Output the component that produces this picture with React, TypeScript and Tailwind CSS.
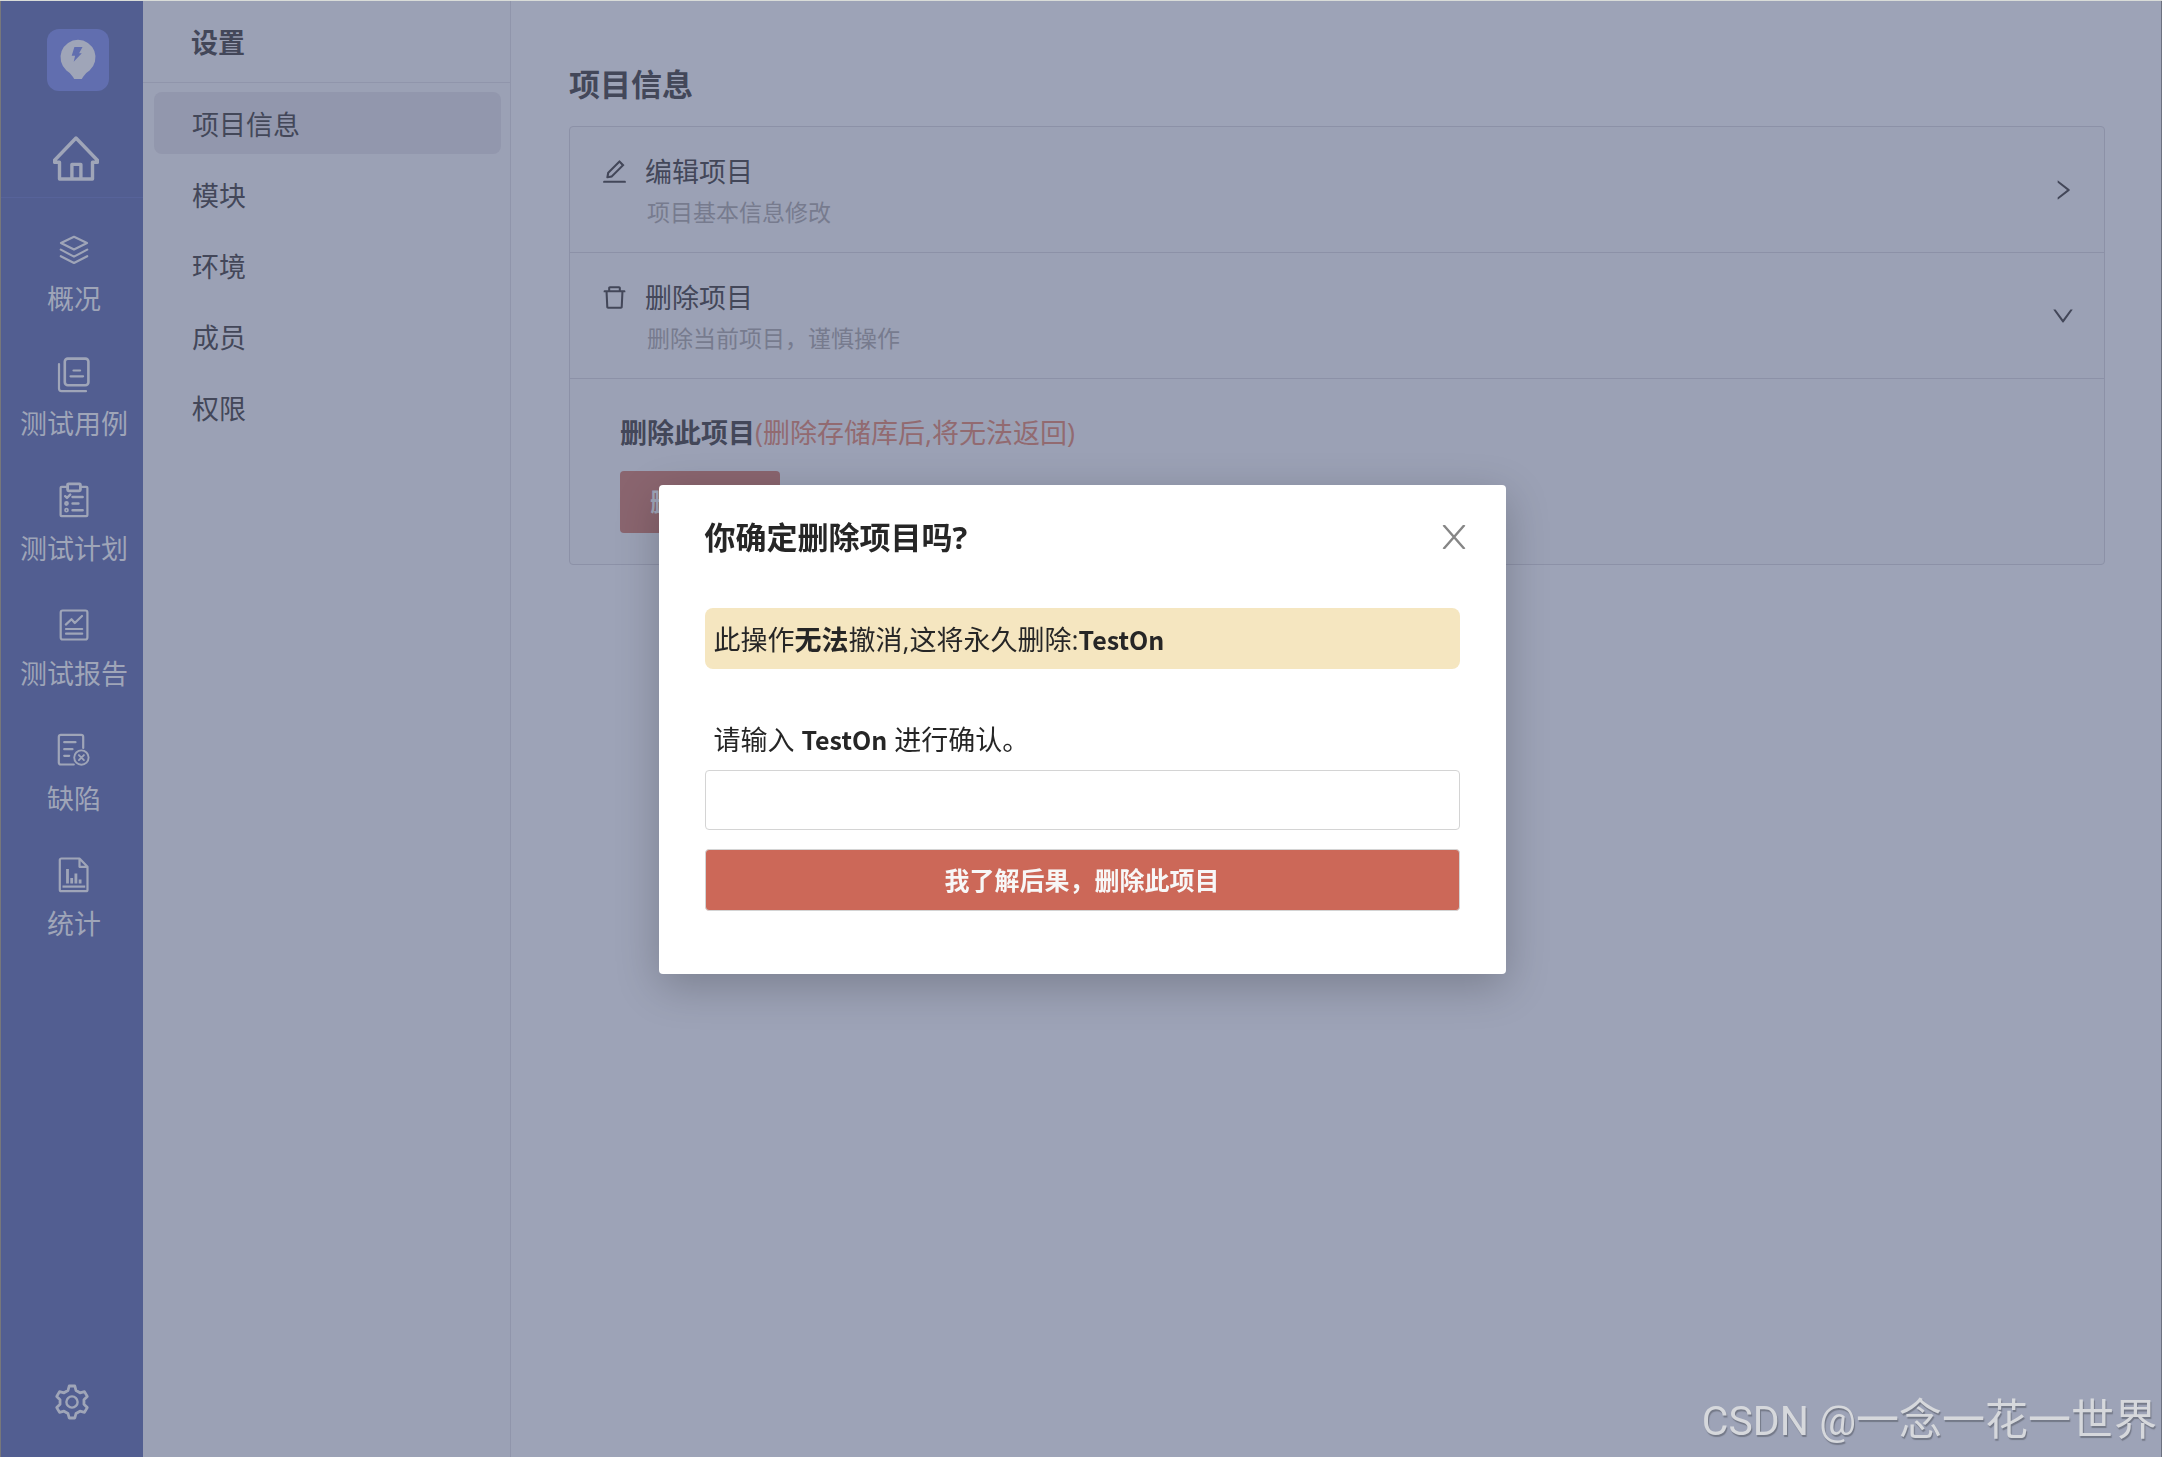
import React, { useState } from 'react';
import { AiOutlineDelete, AiOutlineDown, AiOutlineEdit, AiOutlineRight } from 'react-icons/ai';

const PROJECT_NAME = 'TestOn';

const SETTINGS_MENU = ['项目信息', '模块', '环境', '成员', '权限'];

type IconProps = { children: React.ReactNode };

function NavIcon({ children }: IconProps) {
  return (
    <svg
      viewBox="0 0 36 36"
      className="w-9 h-9"
      fill="none"
      stroke="currentColor"
      strokeWidth="2.2"
      strokeLinecap="round"
      strokeLinejoin="round"
    >
      {children}
    </svg>
  );
}

const NAV_ITEMS = [
  {
    label: '概况',
    icon: (
      <NavIcon>
        <path d="M18 4.8 31 11 18 17.6 5 11ZM4.8 17.6 18 24.6l13.2-7M4.8 24.2 18 31l13.2-6.8" />
      </NavIcon>
    ),
  },
  {
    label: '测试用例',
    icon: (
      <NavIcon>
        <rect x="8.8" y="1.6" width="23.6" height="26.6" rx="3" strokeWidth="2.6" />
        <path d="M3 7v24.6a2.6 2.6 0 0 0 2.6 2.6H30M17.5 13.5h6.6M14.5 19.3h12.6" />
      </NavIcon>
    ),
  },
  {
    label: '测试计划',
    icon: (
      <NavIcon>
        <path d="M11 4.8H5.6a1 1 0 0 0-1 1v27.4a1 1 0 0 0 1 1h24.8a1 1 0 0 0 1-1V5.8a1 1 0 0 0-1-1H25" />
        <rect x="11.6" y="1.8" width="12.8" height="7" rx="1" strokeWidth="2.8" />
        <path d="m9.2 14.2 1.8 1.8 3.2-3.4M16.5 15h10.2M16.5 21.5h6M16.5 28.2h10.2" strokeWidth="2.4" />
        <circle cx="10.5" cy="21.5" r="1.3" />
        <circle cx="10.5" cy="28.2" r="1.5" strokeWidth="1.7" />
      </NavIcon>
    ),
  },
  {
    label: '测试报告',
    icon: (
      <NavIcon>
        <rect x="4.7" y="3.5" width="26.7" height="29" rx="2" />
        <path d="m9.8 17.6 5.7-5.4L18.8 16l7.2-7M10 22h16.2M10 26.7h16.2" />
      </NavIcon>
    ),
  },
  {
    label: '缺陷',
    icon: (
      <NavIcon>
        <path d="M27.2 16V4.8a2 2 0 0 0-2-2H4.8a2 2 0 0 0-2 2v25.7a2 2 0 0 0 2 2h13M8.2 10.2h11.3M8.2 17.2h8.3M8.2 23.8h5" />
        <circle cx="25.4" cy="25.6" r="7.2" strokeWidth="1.9" />
        <path d="m22.9 23.1 5 5M27.9 23.1l-5 5" strokeWidth="1.9" />
      </NavIcon>
    ),
  },
  {
    label: '统计',
    icon: (
      <NavIcon>
        <path d="M23.5 1.5H5.3a1.5 1.5 0 0 0-1.500 1.500v29.700a1.500 1.500 0 0 0 1.500 1.500H30a1.500 1.500 0 0 0 1.500-1.500V9.800ZM23.500 1.500v8.300h8" />
        <path d="M11.5 12v14.500M15.700 21v5.500M19.900 16.500v10M24.100 22.500v4" strokeWidth="2.8" strokeLinecap="butt" />
        <path d="M6.5 29.6h22.700" strokeLinecap="butt" />
      </NavIcon>
    ),
  },
];

function Sidebar() {
  return (
    <aside className="w-[143px] shrink-0 flex flex-col bg-[#525e91] border-l border-[#77777b] text-[#9fa5b8]">
      <div className="flex flex-col items-center h-[197px] pt-[28px] pl-3 border-b border-[#57639a]">
        <a href="#" aria-label="TestOn" className="block rounded-xl bg-[#616eaf]">
          <svg viewBox="0 0 62 62" className="w-[62px] h-[62px]">
            <path
              fill="currentColor"
              d="M31 10.8a17.5 17.5 0 0 1 11.600 30.600Q38 44 36 48L34.800 50h-7.600L26 48Q24 44 19.400 41.400A17.500 17.500 0 0 1 31 10.800Z"
            />
            <path
              fill="#616eaf"
              d="M27.4 18h8.100l-3.400 6.300h2.700l-8.100 8.400 1.400-6h-3.400Z"
            />
          </svg>
        </a>
        <a href="#" aria-label="首页" className="mt-[45px] pr-1">
          <svg
            viewBox="0 0 46 46"
            className="w-[46px] h-[46px]"
            fill="none"
            stroke="currentColor"
            strokeWidth="3.4"
            strokeLinejoin="round"
          >
            <path d="M23 2 44.4 24.2v2H39.5V43h-33V26.2H1.6v-2Z" />
            <path d="M18.9 43V28.4h9V43" />
          </svg>
        </a>
      </div>

      <nav className="flex flex-col pt-[34px] pl-1 gap-9">
        {NAV_ITEMS.map((item) => (
          <a key={item.label} href="#" className="flex flex-col items-center gap-2">
            {item.icon}
            <span className="text-[27px] leading-[45px] whitespace-nowrap">{item.label}</span>
          </a>
        ))}
      </nav>

      <button type="button" aria-label="系统设置" className="mt-auto mb-[37px] self-center">
        <svg
          viewBox="-18 -18 36 36"
          className="w-9 h-9"
          fill="none"
          stroke="currentColor"
          strokeWidth="2.8"
          strokeLinejoin="round"
        >
          <path d="M-4-11.5-2.8-16h5.6L4-11.5 7.96-9.21l4.5-1.21 2.8 4.84-3.3 3.29v4.58l3.3 3.29-2.8 4.84-4.5-1.21L4 11.5 2.8 16h-5.6L-4 11.5l-3.96-2.29-4.5 1.21-2.8-4.84 3.3-3.29v-4.58l-3.3-3.29 2.8-4.84 4.5 1.21Z" />
          <circle r="5.6" strokeWidth="2.4" />
        </svg>
      </button>
    </aside>
  );
}

function SettingsMenu() {
  return (
    <div className="w-[368px] shrink-0 bg-[#9ba1b5] border-r border-[#9095ab]">
      <h2 className="h-[82px] pl-12 border-b border-[#9095ab] text-[27px] leading-[84px] font-bold">
        设置
      </h2>
      <nav className="flex flex-col gap-[9px] pt-[9px] pl-[11px] pr-[9px]">
        {SETTINGS_MENU.map((label, index) => (
          <a
            key={label}
            href="#"
            className={`h-[62px] pl-[38px] rounded-lg text-[27px] leading-[65px] ${
              index === 0 ? 'bg-[#9297ad]' : ''
            }`}
          >
            {label}
          </a>
        ))}
      </nav>
    </div>
  );
}

type SettingRowProps = {
  icon: React.ReactNode;
  title: string;
  description: string;
  open?: boolean;
};

function SettingRow({ icon, title, description, open = false }: SettingRowProps) {
  return (
    <button
      type="button"
      aria-expanded={open}
      className="w-full h-[126px] flex items-center justify-between pl-[30px] pr-7 border-b border-[#8c91a7] text-left"
    >
      <span className="flex gap-4 pt-1">
        <span className="flex items-center h-10 text-[29px]">{icon}</span>
        <span className="flex flex-col">
          <span className="text-[27px] leading-10">{title}</span>
          <span className="pl-[2px] text-[23px] leading-10 text-[#777b8e]">{description}</span>
        </span>
      </span>
      <span className="text-[26px]">{open ? <AiOutlineDown /> : <AiOutlineRight />}</span>
    </button>
  );
}

function ProjectInfo() {
  return (
    <main className="flex-1 pl-[58px] pr-14 pt-[59px] border-r border-[#6c7180]">
      <h1 className="text-[31px] leading-[48px] font-bold">项目信息</h1>
      <section className="mt-[18px] border border-[#8c91a7] rounded bg-[#9ba1b5]">
        <SettingRow
          icon={<AiOutlineEdit />}
          title="编辑项目"
          description="项目基本信息修改"
        />
        <SettingRow
          icon={<AiOutlineDelete />}
          title="删除项目"
          description="删除当前项目，谨慎操作"
          open
        />
        <div className="pl-[50px] pt-[34px] pb-[31px]">
          <p className="text-[27px] leading-10">
            <span className="font-bold">删除此项目</span>
            <span className="text-[#926a70]">(删除存储库后,将无法返回)</span>
          </p>
          <button
            type="button"
            className="mt-[18px] w-40 h-[62px] rounded bg-[#8a656f] text-[25px] font-bold text-[#9fa5b8]"
          >
            删除项目
          </button>
        </div>
      </section>
    </main>
  );
}

function ProjectName() {
  return (
    <b className="text-[25px] font-bold font-['Noto_Sans_CJK_SC',sans-serif]">{PROJECT_NAME}</b>
  );
}

function DeleteProjectDialog() {
  const [confirmName, setConfirmName] = useState('');

  return (
    <div className="fixed inset-0 flex items-center justify-center pl-[2px] pt-[2px]">
      <div
        role="dialog"
        aria-labelledby="delete-title"
        className="w-[847px] px-[46px] pt-7 pb-[63px] rounded bg-white text-[#262626] shadow-[0_12px_44px_rgba(0,0,0,0.22)]"
      >
        <div className="flex items-center justify-between">
          <h2 id="delete-title" className="text-[31px] leading-[48px] font-bold">
            你确定删除项目吗?
          </h2>
          <button type="button" aria-label="关闭" className="-mr-[6px] text-[#868686]">
            <svg
              viewBox="0 0 24 24"
              className="w-6 h-6"
              fill="none"
              stroke="currentColor"
              strokeWidth="2.4"
            >
              <path d="M1.5 0 22.5 24M22.5 0 1.5 24" />
            </svg>
          </button>
        </div>

        <p className="mt-[47px] h-[61px] px-[9px] rounded-lg bg-[#f5e6c0] text-[27px] leading-[62px]">
          此操作<b>无法</b>撤消,这将永久删除:
          <ProjectName />
        </p>

        <form className="mt-[50px]" onSubmit={(e) => e.preventDefault()}>
          <label htmlFor="confirm-name" className="block pl-[9px] text-[27px] leading-[40px]">
            请输入 <ProjectName /> 进行确认。
          </label>
          <input
            id="confirm-name"
            type="text"
            value={confirmName}
            onChange={(e) => setConfirmName(e.target.value)}
            className="mt-[10px] w-full h-[60px] px-4 border border-[#d4d4d4] rounded text-[27px] outline-none"
          />
          <button
            type="submit"
            className="mt-[19px] block w-full h-[62px] pt-[2px] rounded border border-[#d4d4d4] bg-[#cc6858] text-[25px] font-bold text-[#f7f7f7]"
          >
            我了解后果，删除此项目
          </button>
        </form>
      </div>
    </div>
  );
}

export default function App() {
  return (
    <div
      lang="zh-CN"
      className="min-h-screen flex border-t border-[#d9dcd8] bg-[#9da3b7] text-[#434759] font-['Open_Sans','Noto_Sans_CJK_SC',sans-serif]"
    >
      <Sidebar />
      <SettingsMenu />
      <ProjectInfo />
      <DeleteProjectDialog />
      <p className="fixed right-[5px] bottom-1 text-[43px] leading-[64px] text-[#d6d8dc] [text-shadow:1px_2px_1px_#747988] font-['Noto_Sans_CJK_SC',sans-serif]">
        <span className="text-[41px] font-['Roboto',sans-serif]">CSDN @</span>一念一花一世界
      </p>
    </div>
  );
}
